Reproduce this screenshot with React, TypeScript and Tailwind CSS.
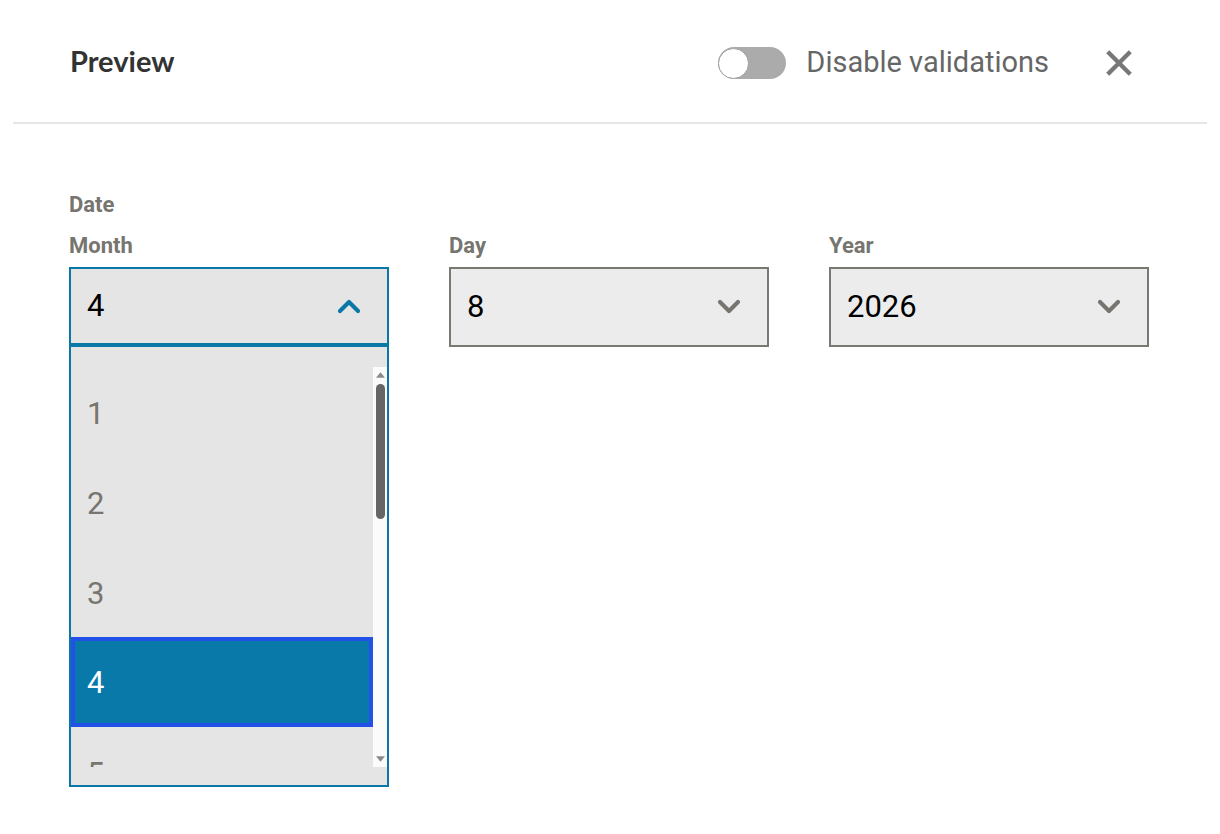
import React from "react";

const labelCls =
  "text-[22px] leading-[28px] font-bold text-[#76756f] [font-family:Roboto,'Liberation_Sans',sans-serif]";

function ChevronDown({ className = "" }: { className?: string }) {
  return (
    <svg viewBox="0 0 24 16" className={className} fill="none">
      <path d="M3 3l9 9 9-9" stroke="currentColor" strokeWidth="4.2" strokeLinecap="round" strokeLinejoin="round" />
    </svg>
  );
}

function ChevronUp({ className = "" }: { className?: string }) {
  return (
    <svg viewBox="0 0 24 16" className={className} fill="none">
      <path d="M3 13l9-9 9 9" stroke="currentColor" strokeWidth="4.2" strokeLinecap="round" strokeLinejoin="round" />
    </svg>
  );
}

function ClosedSelect({ label, value }: { label: string; value: string }) {
  return (
    <div className="w-[320px]">
      <div className={`${labelCls} mb-[7px]`}>{label}</div>
      <div className="h-[80px] bg-[#ececec] border-2 border-[#797973] flex items-center justify-between pl-[16px] pr-[26px]">
        <span className="text-[31px] text-black">{value}</span>
        <ChevronDown className="w-[24px] h-[16px] text-[#76756f]" />
      </div>
    </div>
  );
}

export default function App() {
  const options = ["1", "2", "3", "4", "5"];
  return (
    <div className="min-h-[834px] w-full bg-white [font-family:Roboto,'Liberation_Sans',sans-serif]">
      {/* Header */}
      <div className="mx-[13px] h-[124px] border-b-2 border-[#e6e6e6] flex items-center pl-[57px] pr-[75px]">
        <h1 className="text-[29px] font-bold text-[#333333] [font-family:Lato,'Liberation_Sans',sans-serif] flex-1">
          Preview
        </h1>
        <div className="flex items-center mt-[4px]">
          <div className="w-[68px] h-[32px] rounded-full bg-[#ababab] flex items-center">
            <div className="w-[31px] h-[31px] rounded-full bg-white border border-[#a0a0a0]" />
          </div>
          <span className="ml-[20px] text-[29px] text-[#666666]">Disable validations</span>
          <svg viewBox="0 0 24 24" className="ml-[57px] w-[26px] h-[26px] text-[#777777]" fill="none">
            <path d="M3 3l18 18M21 3L3 21" stroke="currentColor" strokeWidth="4" strokeLinecap="square" />
          </svg>
        </div>
      </div>

      {/* Body */}
      <div className="pl-[69px] pt-[67px]">
        <div className={labelCls}>Date</div>
        <div className="mt-[13px] flex gap-[60px]">
          {/* Month (open) */}
          <div className="w-[320px] relative">
            <div className={`${labelCls} mb-[7px]`}>Month</div>
            <div className="h-[80px] bg-[#e5e5e5] border-2 border-b-4 border-[#0a78a6] flex items-center justify-between pl-[16px] pr-[26px]">
              <span className="text-[31px] text-black">4</span>
              <ChevronUp className="w-[24px] h-[16px] text-[#0a78a6]" />
            </div>
            <div className="absolute left-0 top-full w-[320px] h-[440px] bg-[#e5e5e5] border-2 border-t-0 border-[#0a78a6] pt-[20px] pb-[18px] flex">
              <div className="flex-1 overflow-hidden h-[400px]">
                {options.map((o) => {
                  const selected = o === "4";
                  return (
                    <div
                      key={o}
                      className={
                        selected
                          ? "h-[90px] flex items-center pl-[12px] pt-[3px] bg-[#0879a8] border-4 border-[#2151e6] text-white text-[31px]"
                          : "h-[90px] flex items-center pl-[16px] pt-[4px] text-[#76756f] text-[31px]"
                      }
                    >
                      {o}
                    </div>
                  );
                })}
              </div>
              <div className="w-[14px] h-[400px] bg-[#fbfbfb] flex flex-col items-center">
                <svg viewBox="0 0 10 6" className="mt-[5px] w-[9px] h-[6px]">
                  <path d="M5 0L10 6H0z" fill="#8a8a8a" />
                </svg>
                <div className="mt-[6px] w-[9px] h-[135px] rounded-full bg-[#666666]" />
                <div className="flex-1" />
                <svg viewBox="0 0 10 6" className="mb-[5px] w-[9px] h-[6px]">
                  <path d="M0 0H10L5 6z" fill="#8a8a8a" />
                </svg>
              </div>
            </div>
          </div>
          <ClosedSelect label="Day" value="8" />
          <ClosedSelect label="Year" value="2026" />
        </div>
      </div>
    </div>
  );
}
